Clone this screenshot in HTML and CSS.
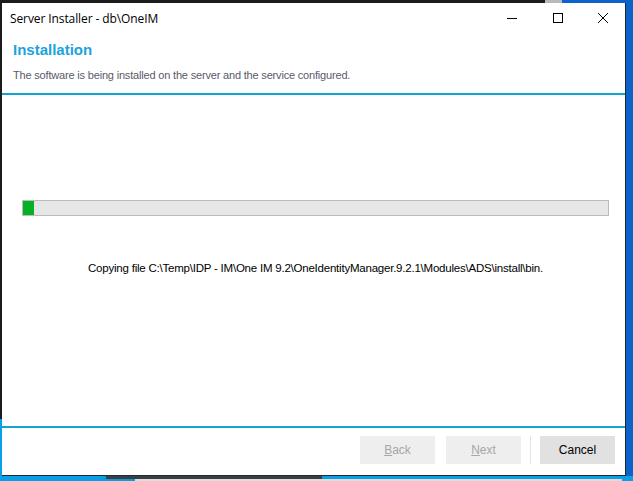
FILE: index.html
```html
<!DOCTYPE html>
<html>
<head>
<meta charset="utf-8">
<link rel="stylesheet" href="styles.css">
</head>
<body>
<div class="desktop">
  <span class="deco deco-top"></span>
  <span class="deco deco-topgray"></span>
  <span class="deco deco-right"></span>
  <span class="deco deco-bottom"></span>
  <span class="deco deco-left"></span>
  <span class="deco deco-taskbar"></span>
  <span class="deco deco-line"></span>
  <div class="window">
    <div class="titlebar">
      <span class="title">Server Installer - db\OneIM</span>
      <div class="controls">
        <span class="ctl"><svg width="12" height="12" viewBox="0 0 12 12"><path d="M1 6.5h10" stroke="#000" stroke-width="1"/></svg></span>
        <span class="ctl"><svg width="12" height="12" viewBox="0 0 12 12"><rect x="1.5" y="1.5" width="9" height="9" fill="none" stroke="#000" stroke-width="1"/></svg></span>
        <span class="ctl"><svg width="12" height="12" viewBox="0 0 12 12"><path d="M1 1L11 11M11 1L1 11" stroke="#000" stroke-width="1"/></svg></span>
      </div>
    </div>
    <div class="header">
      <h1 class="heading">Installation</h1>
      <p class="subtitle">The software is being installed on the server and the service configured.</p>
    </div>
    <div class="main">
      <div class="progress"><div class="fill" style="width:11px"></div></div>
      <p class="status">Copying file C:\Temp\IDP - IM\One IM 9.2\OneIdentityManager.9.2.1\Modules\ADS\install\bin.</p>
    </div>
    <div class="footer">
      <button class="btn disabled"><u>B</u>ack</button>
      <button class="btn disabled"><u>N</u>ext</button>
      <span class="sep"></span>
      <button class="btn">Cancel</button>
    </div>
  </div>
</div>
</body>
</html>
```

FILE: styles.css
```css
html, body {
  margin: 0;
  padding: 0;
  background: #1c1c1c;
}
.desktop {
  position: relative;
  width: 633px;
  height: 481px;
  overflow: hidden;
  background: #1c1c1c;
  padding: 3px 0 0 2px;
  box-sizing: border-box;
}
.deco {
  position: absolute;
  display: block;
}
.deco-top { left: 562px; top: 0; width: 71px; height: 3px; background: #0b62c9; }
.deco-topgray { left: 545px; top: 0; width: 17px; height: 3px; background: #b9b9b9; }
.deco-right { left: 626px; top: 0; width: 7px; height: 481px; background: #0b62c9; }
.deco-bottom { left: 0; top: 476px; width: 633px; height: 5px; background: #0aa0e6; }
.deco-left { left: 0; top: 419px; width: 2px; height: 62px; background: #0aa0e6; }
.deco-taskbar { left: 106px; top: 472px; width: 216px; height: 7px; background: #3a3f44; box-shadow: 0 -4px 12px rgba(0,0,0,0.15); }
.deco-line { left: 135px; top: 479px; width: 487px; height: 2px; background: #dcdcdc; }

.window {
  position: relative;
  width: 624px;
  height: 473px;
  background: #fff;
  border-right: 1px solid #1f2a36;
  border-bottom: 1px solid #1f2a36;
  box-sizing: border-box;
  display: flex;
  flex-direction: column;
}
.titlebar {
  height: 30px;
  display: flex;
  align-items: center;
  justify-content: space-between;
  flex: none;
}
.title {
  font-family: "Open Sans", "Noto Sans", sans-serif;
  font-size: 12px;
  color: #000;
  padding-left: 8px;
  letter-spacing: -0.1px;
}
.controls {
  display: flex;
  height: 30px;
}
.ctl {
  width: 46px;
  height: 30px;
  display: flex;
  align-items: center;
  justify-content: center;
}
.controls .ctl:last-child { width: 44px; }
.header {
  height: 62px;
  border-bottom: 2px solid #12a4d2;
  flex: none;
  padding-left: 11px;
  box-sizing: border-box;
  padding-top: 8px;
}
.heading {
  margin: 0;
  font-family: "Liberation Sans", Arial, sans-serif;
  font-weight: bold;
  font-size: 15px;
  color: #1aa3dc;
  line-height: 18px;
}
.subtitle {
  margin: 9px 0 0 0;
  font-family: "Liberation Sans", Arial, sans-serif;
  font-size: 11px;
  color: #5a5a6a;
  line-height: 14px;
  letter-spacing: -0.18px;
}
.main {
  flex: 1;
  border-bottom: 2px solid #12a4d2;
  padding: 105px 16px 0 20px;
  box-sizing: border-box;
}
.progress {
  height: 16px;
  border: 1px solid #bcbcbc;
  background: #e6e6e6;
  box-sizing: border-box;
}
.fill {
  height: 14px;
  background: #06b025;
}
.status {
  margin: 45px 0 0 0;
  text-align: center;
  font-family: "Liberation Sans", Arial, sans-serif;
  font-size: 11.5px;
  color: #000;
  letter-spacing: -0.22px;
  line-height: 14px;
}
.footer {
  height: 47px;
  flex: none;
  display: flex;
  align-items: flex-start;
  justify-content: flex-end;
  padding: 8px 10px 0 0;
  box-sizing: border-box;
  gap: 11px;
}
.btn {
  width: 75px;
  height: 28px;
  border: none;
  background: #e1e1e1;
  font-family: "Liberation Sans", Arial, sans-serif;
  font-size: 12px;
  color: #000;
  padding: 0;
}
.btn.disabled {
  background: #eeeeee;
  color: #a6a6a6;
}
.sep {
  width: 1px;
  height: 28px;
  background: #e3e3e3;
  margin: 0 -2px;
}
```
